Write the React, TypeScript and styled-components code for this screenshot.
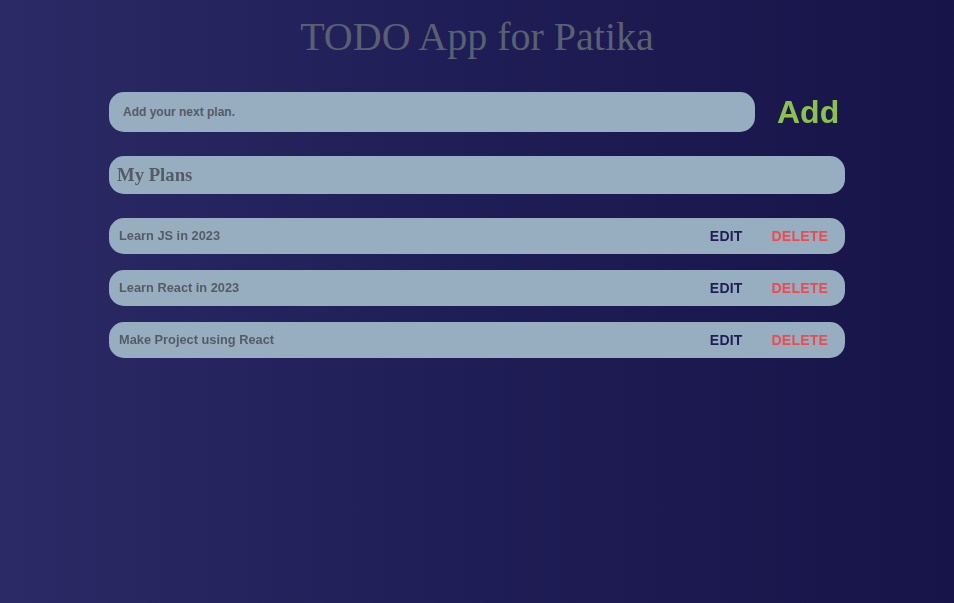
import React, { useState } from "react";
import styled, { createGlobalStyle } from "styled-components";

const GlobalStyle = createGlobalStyle`
  html, body {
    margin: 0;
    padding: 0;
  }
  body {
    font-family: "Liberation Sans", Arial, sans-serif;
  }
`;

const Page = styled.div`
  min-height: 603px;
  background: linear-gradient(to right, #2b2a66 0%, #1f1d55 50%, #171449 100%);
  padding-top: 14px;
  box-sizing: border-box;
`;

const Title = styled.h1`
  margin: 0;
  text-align: center;
  font-family: "Liberation Serif", "Times New Roman", serif;
  font-weight: 400;
  font-size: 40px;
  line-height: 46px;
  color: #596170;
`;

const Container = styled.div`
  width: 736px;
  margin: 32px auto 0;
  display: flex;
  flex-direction: column;
`;

const Form = styled.form`
  display: flex;
  align-items: center;
  margin-bottom: 24px;
`;

const Input = styled.input`
  width: 646px;
  height: 40px;
  box-sizing: border-box;
  border: none;
  outline: none;
  border-radius: 15px;
  background: #97aec0;
  padding: 0 12px 0 14px;
  font-family: "Liberation Sans", Arial, sans-serif;
  font-weight: 700;
  font-size: 12px;
  color: #555b66;
  caret-color: #555b66;
  &::placeholder {
    color: #555b66;
    opacity: 1;
  }
`;

const AddButton = styled.button`
  background: none;
  border: none;
  padding: 0;
  margin-left: 22px;
  font-family: "Liberation Sans", Arial, sans-serif;
  font-weight: 700;
  font-size: 32px;
  color: #8bc34a;
  cursor: pointer;
`;

const Header = styled.div`
  height: 38px;
  border-radius: 15px;
  background: #97aec0;
  display: flex;
  align-items: center;
  padding: 0 8px;
  margin-bottom: 24px;
`;

const HeaderTitle = styled.h3`
  margin: 0;
  font-family: "Liberation Serif", "Times New Roman", serif;
  font-weight: 700;
  font-size: 18.72px;
  color: #555b66;
`;

const List = styled.ul`
  list-style: none;
  margin: 0;
  padding: 0;
  display: flex;
  flex-direction: column;
  gap: 16px;
`;

const Row = styled.li`
  height: 36px;
  border-radius: 15px;
  background: #97aec0;
  display: flex;
  align-items: center;
  padding: 0 17px 0 10px;
`;

const RowText = styled.span`
  flex: 1;
  font-weight: 700;
  font-size: 12.8px;
  color: #555b66;
  margin-top: -1px;
`;

const ActionButton = styled.button<{ $variant: "edit" | "delete" }>`
  background: none;
  border: none;
  padding: 0;
  margin-left: ${(p) => (p.$variant === "delete" ? "29px" : "0")};
  font-family: "Liberation Sans", Arial, sans-serif;
  font-weight: 700;
  font-size: 14px;
  letter-spacing: 0.2px;
  color: ${(p) => (p.$variant === "delete" ? "#f04a4e" : "#1f1d55")};
  cursor: pointer;
`;

const initial = ["Learn JS in 2023", "Learn React in 2023", "Make Project using React"];

export default function App() {
  const [items] = useState(initial);
  return (
    <Page>
      <GlobalStyle />
      <Title>TODO App for Patika</Title>
      <Container>
        <Form onSubmit={(e) => e.preventDefault()}>
          <Input placeholder="Add your next plan." autoFocus />
          <AddButton type="submit">Add</AddButton>
        </Form>
        <Header>
          <HeaderTitle>My Plans</HeaderTitle>
        </Header>
        <List>
          {items.map((t) => (
            <Row key={t}>
              <RowText>{t}</RowText>
              <ActionButton $variant="edit">EDIT</ActionButton>
              <ActionButton $variant="delete">DELETE</ActionButton>
            </Row>
          ))}
        </List>
      </Container>
    </Page>
  );
}
